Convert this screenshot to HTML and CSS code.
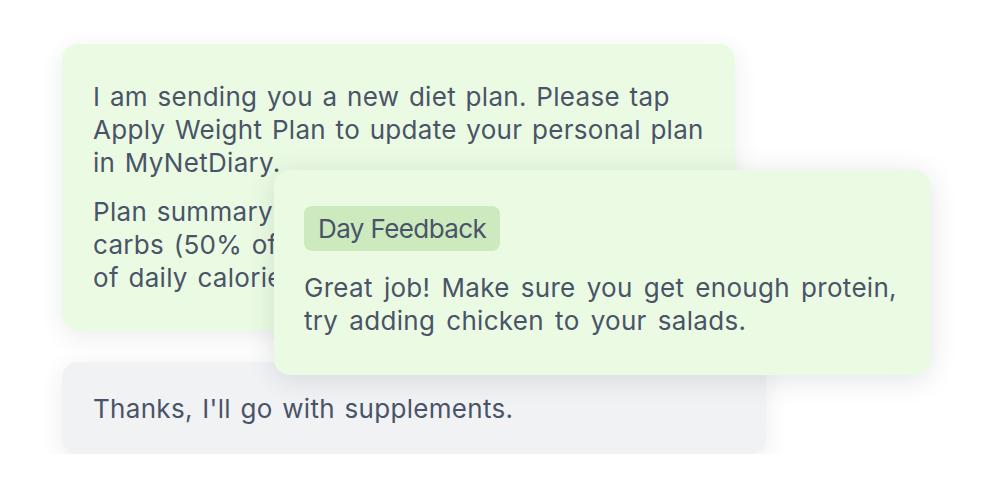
FILE: index.html
```html
<!DOCTYPE html>
<html lang="en">
<head>
    <meta charset="UTF-8">
    <meta name="viewport" content="width=device-width, initial-scale=1.0">
    <title>Coach Chat</title>
    <link rel="stylesheet" href="styles.css">
</head>
<body>
    <div class="stage">
        <div class="bubble coach plan">
            <p>I am sending you a new diet plan. Please tap Apply Weight Plan to update your personal plan in MyNetDiary.</p>
            <p>Plan summary: 1,800 calories per day, 225 g of carbs (50% of calories), 90 g of protein (20% of daily calories), 60 g fat (30%).</p>
        </div>
        <div class="bubble user">
            <p>Thanks, I'll go with supplements.</p>
        </div>
        <div class="bubble coach feedback">
            <span class="badge">Day Feedback</span>
            <p>Great job! Make sure you get enough protein, try adding chicken to your salads.</p>
        </div>
    </div>
</body>
</html>
```

FILE: styles.css
```css
body {
    margin: 0;
    background-color: #ffffff;
    font-family: 'Inter', 'Roboto', Arial, sans-serif;
    color: #4a5468;
}
.stage {
    position: relative;
    display: flex;
    flex-direction: column;
    align-items: flex-start;
    gap: 32px;
    padding: 44px 0 0 62px;
}
.bubble {
    box-sizing: border-box;
    border-radius: 16px;
    box-shadow: 0 6px 24px rgba(30, 40, 60, 0.09);
    font-size: 26px;
    line-height: 33px;
    letter-spacing: 0.3px;
    word-spacing: 2px;
}
.bubble p {
    margin: 0;
}
.coach {
    background-color: #ebfbe3;
}
.user {
    background-color: #f1f2f4;
    width: 704px;
    padding: 30px 31px 29px;
}
.plan {
    width: 673px;
    padding: 36px 31px 36px;
}
.plan p + p {
    margin-top: 16px;
}
.feedback {
    position: absolute;
    left: 274px;
    top: 170px;
    width: 656px;
    padding: 36px 30px 38px;
    box-shadow: 0 4px 28px rgba(30, 40, 60, 0.13);
    word-spacing: 3.5px;
}
.badge {
    display: inline-block;
    padding: 6px 14px;
    border-radius: 8px;
    background-color: #cdeabf;
    margin-bottom: 20px;
    letter-spacing: -0.6px;
    word-spacing: 0;
}
```
